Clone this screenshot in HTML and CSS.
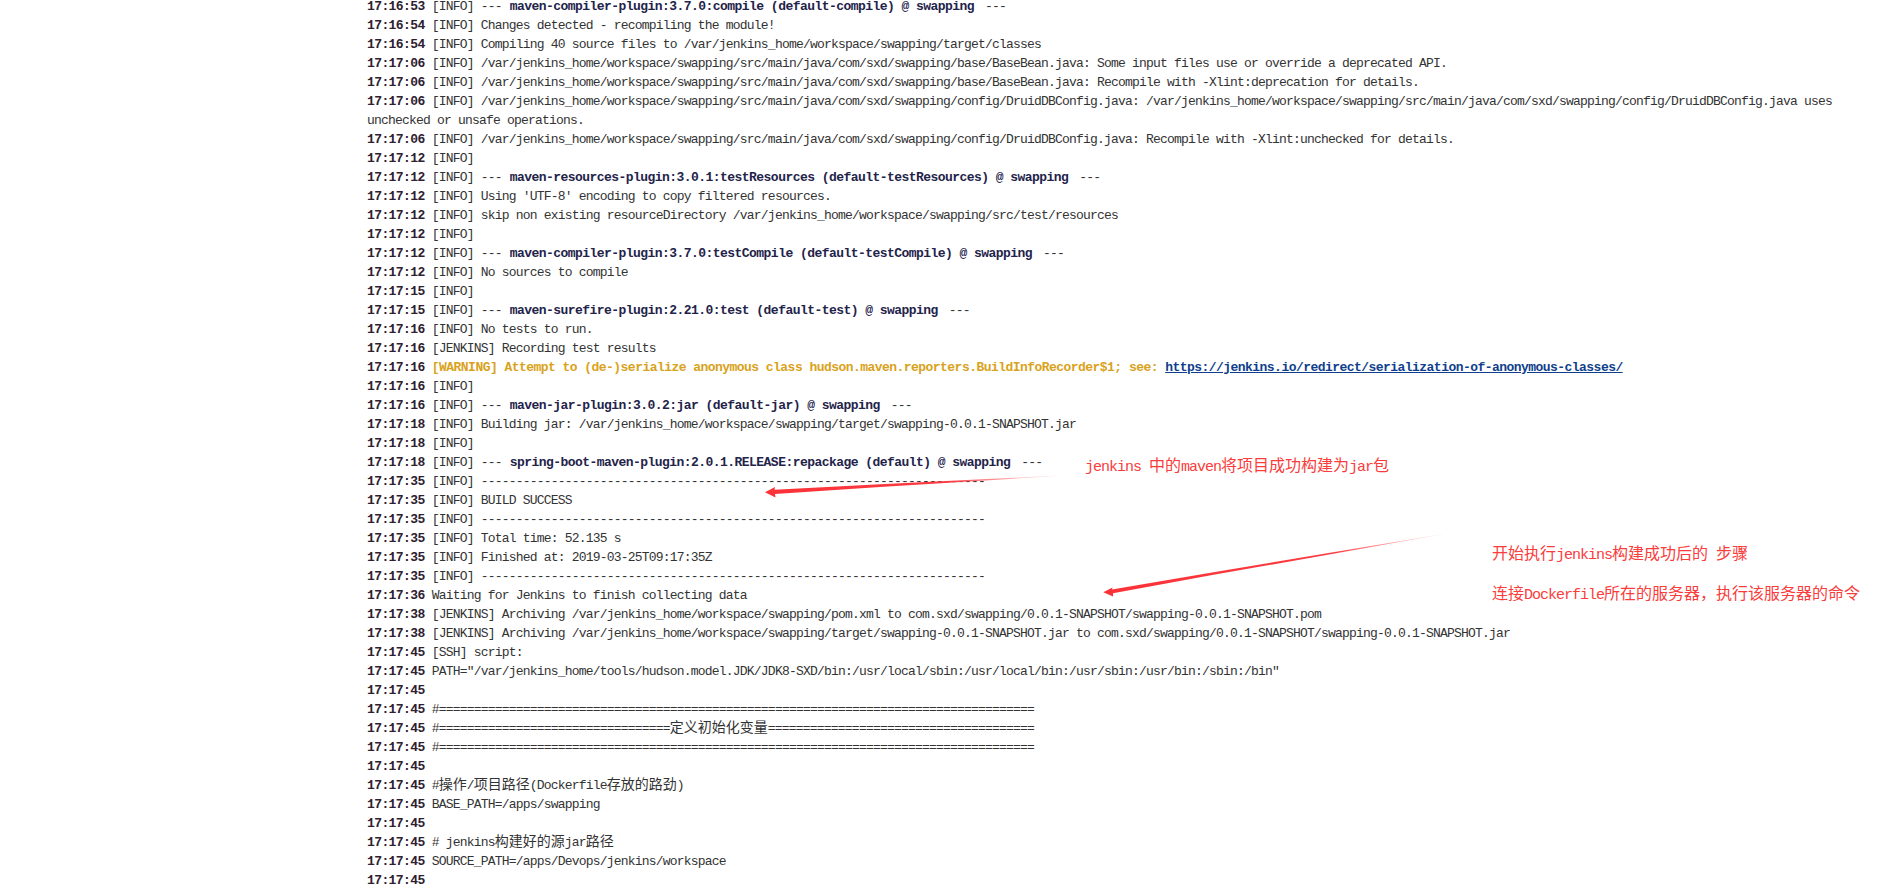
FILE: index.html
```html
<!DOCTYPE html>
<html lang="zh">
<head>
<meta charset="utf-8">
<title>Console Output</title>
<link rel="stylesheet" href="styles.css">
</head>
<body>
<main class="log">
<div class="l"><b class="t">17:16:53 </b>[INFO] --- <b class="m">maven-compiler-plugin:3.7.0:compile (default-compile) @ swapping</b> ---</div>
<div class="l"><b class="t">17:16:54 </b>[INFO] Changes detected - recompiling the module!</div>
<div class="l"><b class="t">17:16:54 </b>[INFO] Compiling 40 source files to /var/jenkins_home/workspace/swapping/target/classes</div>
<div class="l"><b class="t">17:17:06 </b>[INFO] /var/jenkins_home/workspace/swapping/src/main/java/com/sxd/swapping/base/BaseBean.java: Some input files use or override a deprecated API.</div>
<div class="l"><b class="t">17:17:06 </b>[INFO] /var/jenkins_home/workspace/swapping/src/main/java/com/sxd/swapping/base/BaseBean.java: Recompile with -Xlint:deprecation for details.</div>
<div class="l"><b class="t">17:17:06 </b>[INFO] /var/jenkins_home/workspace/swapping/src/main/java/com/sxd/swapping/config/DruidDBConfig.java: /var/jenkins_home/workspace/swapping/src/main/java/com/sxd/swapping/config/DruidDBConfig.java uses unchecked or unsafe operations.</div>
<div class="l"><b class="t">17:17:06 </b>[INFO] /var/jenkins_home/workspace/swapping/src/main/java/com/sxd/swapping/config/DruidDBConfig.java: Recompile with -Xlint:unchecked for details.</div>
<div class="l"><b class="t">17:17:12 </b>[INFO]</div>
<div class="l"><b class="t">17:17:12 </b>[INFO] --- <b class="m">maven-resources-plugin:3.0.1:testResources (default-testResources) @ swapping</b> ---</div>
<div class="l"><b class="t">17:17:12 </b>[INFO] Using 'UTF-8' encoding to copy filtered resources.</div>
<div class="l"><b class="t">17:17:12 </b>[INFO] skip non existing resourceDirectory /var/jenkins_home/workspace/swapping/src/test/resources</div>
<div class="l"><b class="t">17:17:12 </b>[INFO]</div>
<div class="l"><b class="t">17:17:12 </b>[INFO] --- <b class="m">maven-compiler-plugin:3.7.0:testCompile (default-testCompile) @ swapping</b> ---</div>
<div class="l"><b class="t">17:17:12 </b>[INFO] No sources to compile</div>
<div class="l"><b class="t">17:17:15 </b>[INFO]</div>
<div class="l"><b class="t">17:17:15 </b>[INFO] --- <b class="m">maven-surefire-plugin:2.21.0:test (default-test) @ swapping</b> ---</div>
<div class="l"><b class="t">17:17:16 </b>[INFO] No tests to run.</div>
<div class="l"><b class="t">17:17:16 </b>[JENKINS] Recording test results</div>
<div class="l"><b class="t">17:17:16 </b><b class="w">[WARNING] Attempt to (de-)serialize anonymous class hudson.maven.reporters.BuildInfoRecorder$1; see: </b><a class="u" href="#">https://jenkins.io/redirect/serialization-of-anonymous-classes/</a></div>
<div class="l"><b class="t">17:17:16 </b>[INFO]</div>
<div class="l"><b class="t">17:17:16 </b>[INFO] --- <b class="m">maven-jar-plugin:3.0.2:jar (default-jar) @ swapping</b> ---</div>
<div class="l"><b class="t">17:17:18 </b>[INFO] Building jar: /var/jenkins_home/workspace/swapping/target/swapping-0.0.1-SNAPSHOT.jar</div>
<div class="l"><b class="t">17:17:18 </b>[INFO]</div>
<div class="l"><b class="t">17:17:18 </b>[INFO] --- <b class="m">spring-boot-maven-plugin:2.0.1.RELEASE:repackage (default) @ swapping</b> ---</div>
<div class="l"><b class="t">17:17:35 </b>[INFO] ------------------------------------------------------------------------</div>
<div class="l"><b class="t">17:17:35 </b>[INFO] BUILD SUCCESS</div>
<div class="l"><b class="t">17:17:35 </b>[INFO] ------------------------------------------------------------------------</div>
<div class="l"><b class="t">17:17:35 </b>[INFO] Total time: 52.135 s</div>
<div class="l"><b class="t">17:17:35 </b>[INFO] Finished at: 2019-03-25T09:17:35Z</div>
<div class="l"><b class="t">17:17:35 </b>[INFO] ------------------------------------------------------------------------</div>
<div class="l"><b class="t">17:17:36 </b>Waiting for Jenkins to finish collecting data</div>
<div class="l"><b class="t">17:17:38 </b>[JENKINS] Archiving /var/jenkins_home/workspace/swapping/pom.xml to com.sxd/swapping/0.0.1-SNAPSHOT/swapping-0.0.1-SNAPSHOT.pom</div>
<div class="l"><b class="t">17:17:38 </b>[JENKINS] Archiving /var/jenkins_home/workspace/swapping/target/swapping-0.0.1-SNAPSHOT.jar to com.sxd/swapping/0.0.1-SNAPSHOT/swapping-0.0.1-SNAPSHOT.jar</div>
<div class="l"><b class="t">17:17:45 </b>[SSH] script:</div>
<div class="l"><b class="t">17:17:45 </b>PATH="/var/jenkins_home/tools/hudson.model.JDK/JDK8-SXD/bin:/usr/local/sbin:/usr/local/bin:/usr/sbin:/usr/bin:/sbin:/bin"</div>
<div class="l"><b class="t">17:17:45 </b></div>
<div class="l"><b class="t">17:17:45 </b>#=====================================================================================</div>
<div class="l"><b class="t">17:17:45 </b>#=================================<span class="zh">定义初始化变量</span>======================================</div>
<div class="l"><b class="t">17:17:45 </b>#=====================================================================================</div>
<div class="l"><b class="t">17:17:45 </b></div>
<div class="l"><b class="t">17:17:45 </b>#<span class="zh">操作</span>/<span class="zh">项目路径</span>(Dockerfile<span class="zh">存放的路劲</span>)</div>
<div class="l"><b class="t">17:17:45 </b>BASE_PATH=/apps/swapping</div>
<div class="l"><b class="t">17:17:45 </b></div>
<div class="l"><b class="t">17:17:45 </b># jenkins<span class="zh">构建好的源</span>jar<span class="zh">路径</span></div>
<div class="l"><b class="t">17:17:45 </b>SOURCE_PATH=/apps/Devops/jenkins/workspace</div>
<div class="l"><b class="t">17:17:45 </b></div>
</main>
<svg class="arrows" width="1889" height="890" viewBox="0 0 1889 890" aria-hidden="true">
<defs>
<linearGradient id="fade1" gradientUnits="userSpaceOnUse" x1="765" y1="492" x2="1070" y2="476">
<stop offset="0" stop-color="#fb3238"/><stop offset="0.6" stop-color="#fb3a40"/><stop offset="1" stop-color="#ff6a6d" stop-opacity="0"/>
</linearGradient>
<linearGradient id="fade2" gradientUnits="userSpaceOnUse" x1="1103" y1="592" x2="1458" y2="534">
<stop offset="0" stop-color="#fb3238"/><stop offset="0.65" stop-color="#fb3a40"/><stop offset="1" stop-color="#ff6a6d" stop-opacity="0"/>
</linearGradient>
</defs>
<polygon fill="url(#fade1)" points="765,492.3 775,487 774.5,489.7 880,484.3 1058,475.6 1058,476 880,487 775,494 775.5,497.5"/>
<polygon fill="url(#fade2)" points="1103.3,592.3 1112.5,587.5 1112,589.6 1215,572 1443,534 1443,534.3 1215,574.6 1113,593.3 1113,596.5"/>
</svg>
<p class="note note-a">jenkins <span class="cn">中的</span>maven<span class="cn">将项目成功构建为</span>jar<span class="cn">包</span></p>
<p class="note note-b"><span class="cn">开始执行</span>jenkins<span class="cn">构建成功后的</span> <span class="cn">步骤</span></p>
<p class="note note-c"><span class="cn">连接</span>Dockerfile<span class="cn">所在的服务器，执行该服务器的命令</span></p>
</body>
</html>
```
FILE: styles.css
```css
html, body {
  margin: 0;
  padding: 0;
  background: #fff;
  height: 890px;
  overflow: hidden;
}

body {
  position: relative;
}

.log {
  margin-top: -3px;
  padding-left: 367px;
  font-family: "Liberation Mono", "Noto Sans CJK SC", monospace;
  font-size: 13px;
  letter-spacing: -0.8px;
  line-height: 19px;
  color: #333;
}

.l {
  min-height: 19px;
  white-space: pre-wrap;
}

.t {
  letter-spacing: -0.6px;
  color: #2e2030;
}

.m {
  padding: 0 4px 0 1px;
  letter-spacing: -0.55px;
  color: #23234a;
}

.w {
  letter-spacing: -0.54px;
  color: #d9a21b;
}

.u {
  letter-spacing: -0.54px;
  font-weight: bold;
  color: #0f3f8c;
  text-decoration: underline;
}

.zh {
  font-family: "Noto Sans CJK SC", sans-serif;
  font-size: 14px;
  letter-spacing: 0;
  line-height: 0;
}

.arrows {
  position: absolute;
  left: 0;
  top: 0;
  pointer-events: none;
}

.note {
  position: absolute;
  margin: 0;
  font-family: "Liberation Mono", "Noto Sans CJK SC", monospace;
  font-size: 15px;
  letter-spacing: -1px;
  line-height: 20px;
  color: #f93c3c;
  white-space: pre;
}

.cn {
  font-family: "Noto Sans CJK SC", sans-serif;
  font-size: 16px;
  letter-spacing: 0;
  line-height: 0;
}

.note-a { left: 1085px; top: 458px; }
.note-b { left: 1492px; top: 546px; }
.note-c { left: 1492px; top: 586px; }
```
